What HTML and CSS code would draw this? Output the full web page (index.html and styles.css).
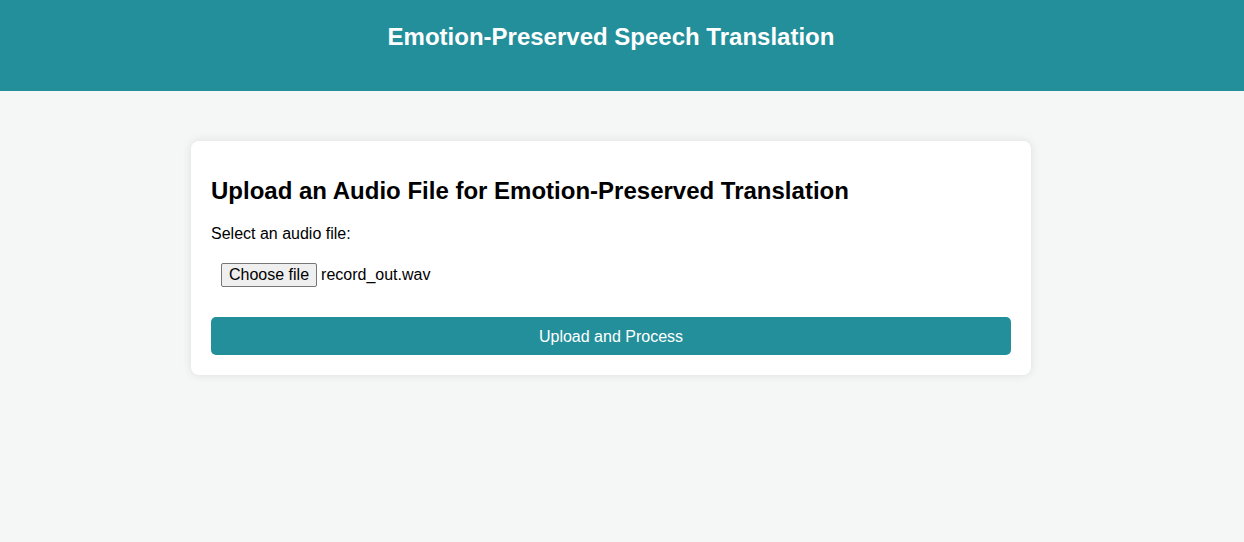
FILE: index.html
```html
<!DOCTYPE html>
<html lang="en">
<head>
<meta charset="utf-8">
<title>Emotion-Preserved Speech Translation</title>
<link rel="stylesheet" href="styles.css">
</head>
<body>
<header class="site-header">
  <h1 class="site-title">Emotion-Preserved Speech Translation</h1>
</header>
<main class="page">
  <section class="card">
    <h2 class="card-title">Upload an Audio File for Emotion-Preserved Translation</h2>
    <form class="upload-form" onsubmit="return false;">
      <label class="field-label" for="audio">Select an audio file:</label>
      <div class="file-row">
        <button type="button" class="file-btn">Choose file</button>
        <span class="file-name">record_out.wav</span>
      </div>
      <button type="submit" class="submit-btn">Upload and Process</button>
    </form>
  </section>
</main>
</body>
</html>
```

FILE: styles.css
```css
* { box-sizing: border-box; }
html, body {
  margin: 0;
  padding: 0;
}
body {
  background: #f4f7f6;
  font-family: "Liberation Sans", Arial, sans-serif;
  color: #000;
  min-height: 542px;
}
.site-header {
  background: #238f9b;
  padding: 23px 22px 40px 0;
}
.site-title {
  margin: 0;
  font-size: 24px;
  font-weight: bold;
  color: #fff;
  text-align: center;
  line-height: 27.6px;
}
.page {
  padding: 50px 22px 0 0;
}
.card {
  width: 840px;
  margin: 0 auto;
  background: #fff;
  border-radius: 8px;
  box-shadow: 0 0 10px rgba(0, 0, 0, 0.1);
  padding: 17px 20px 20px;
}
.card-title {
  font-size: 24px;
  font-weight: bold;
  margin: 19px 0 21px;
  line-height: 27.6px;
}
.upload-form {
  display: flex;
  flex-direction: column;
}
.field-label {
  font-size: 16px;
  line-height: 18.4px;
  margin-bottom: 9px;
}
.file-row {
  display: flex;
  align-items: center;
  margin: 10px;
  gap: 4px;
  font-size: 16px;
}
.file-btn {
  font-family: "Liberation Sans", Arial, sans-serif;
  font-size: 16px;
  height: 24px;
  padding: 0 7px;
  background: #efefef;
  border: 1px solid #767676;
  border-radius: 2px;
  color: #000;
  line-height: 20px;
}
.file-name {
  line-height: 24px;
}
.submit-btn {
  margin-top: 20px;
  height: 38px;
  width: 100%;
  padding: 2px 0 0;
  background: #238f9b;
  color: #fff;
  border: none;
  border-radius: 5px;
  font-family: "Liberation Sans", Arial, sans-serif;
  font-size: 16px;
  cursor: pointer;
}
```
